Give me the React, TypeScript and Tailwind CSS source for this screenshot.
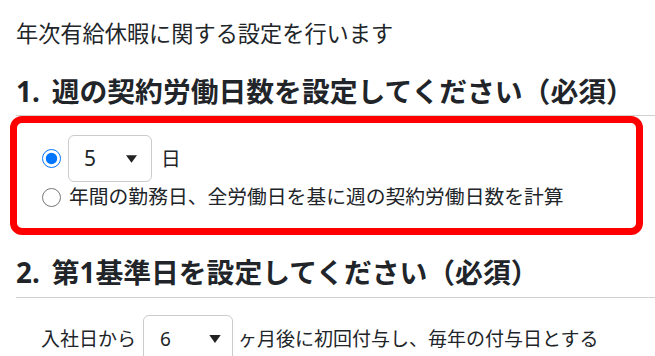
import React from "react";

function Caret({ className }: { className: string }) {
  return (
    <svg
      viewBox="0 0 10 7"
      className={`pointer-events-none absolute top-1/2 -translate-y-1/2 ${className}`}
    >
      <polygon points="0,0 10,0 5,7" fill="#222" />
    </svg>
  );
}

export default function App() {
  return (
    <div className="min-h-screen bg-white pl-[16px] pt-[19px] font-['Noto_Sans','Noto_Sans_CJK_JP',sans-serif] text-[#212529]">
      <p className="text-[22.2px] leading-[30px]">年次有給休暇に関する設定を行います</p>

      {/* 1. weekly working days */}
      <h2 className="mt-[24px] border-b border-[#d0d0d0] pb-[6px] text-[27.8px] font-bold leading-[36px]">
        <span className="mr-[12px]">1.</span>週の契約労働日数を設定してください（必須）
      </h2>

      <div className="-ml-[6px] mr-[12px] rounded-[12px] border-[7px] border-[#ff0000] pb-[16px] pl-[25px] pt-[12px]">
        <div className="flex h-[47px] items-center">
          <input
            type="radio"
            name="days"
            defaultChecked
            className="m-0 h-[19px] w-[19px]"
          />
          <div className="relative ml-[7px]">
            <select
              defaultValue="5"
              className="h-[47px] w-[84px] appearance-none rounded-[6px] border border-[#cccccc] bg-white pl-[15px] text-[21px] text-[#212529] outline-none"
            >
              {[1, 2, 3, 4, 5, 6, 7].map((n) => (
                <option key={n} value={String(n)}>
                  {n}
                </option>
              ))}
            </select>
            <Caret className="right-[15px] h-[8px] w-[11px]" />
          </div>
          <span className="ml-[9px] text-[19.8px]">日</span>
        </div>

        <label className="flex h-[30px] items-center">
          <input type="radio" name="days" className="m-0 h-[19px] w-[19px]" />
          <span className="ml-[8px] text-[19.8px] leading-[30px]">
            年間の勤務日、全労働日を基に週の契約労働日数を計算
          </span>
        </label>
      </div>

      {/* 2. first reference date */}
      <h2 className="mt-[19px] border-b border-[#d0d0d0] pb-[7px] text-[27.8px] font-bold leading-[36px]">
        <span className="mr-[12px]">2.</span>第1基準日を設定してください（必須）
      </h2>

      <div className="mt-[17px] flex items-center pl-[25px] text-[19px]">
        <span>入社日から</span>
        <div className="relative ml-[7px]">
          <select
            defaultValue="6"
            className="h-[48px] w-[90px] appearance-none rounded-[6px] border border-[#cccccc] bg-white pl-[16px] text-[19px] text-[#212529] outline-none"
          >
            {[1, 2, 3, 4, 5, 6, 7, 8, 9, 10, 11, 12].map((n) => (
              <option key={n} value={String(n)}>
                {n}
              </option>
            ))}
          </select>
          <Caret className="right-[12px] h-[8px] w-[12px]" />
        </div>
        <span className="ml-[5px]">ヶ月後に初回付与し、毎年の付与日とする</span>
      </div>
    </div>
  );
}
